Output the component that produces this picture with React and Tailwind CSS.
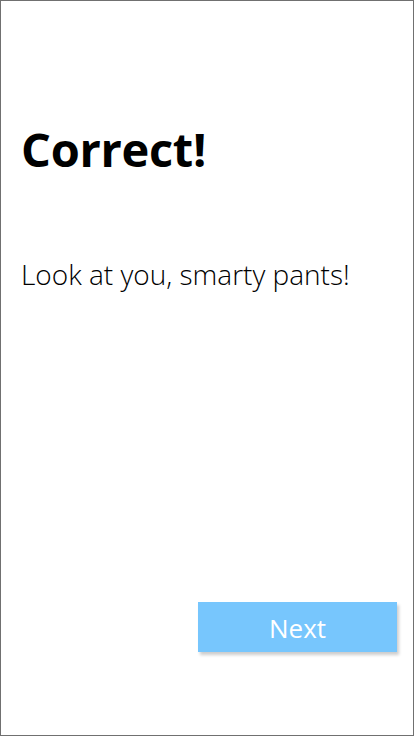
import React from "react";

export default function App() {
    return (
        <div className="w-[414px] h-[736px] border border-[#707070] bg-white flex flex-col font-['Segoe_UI','Open_Sans',sans-serif] text-black">
            {/* Heading */}
            <h1 className="mt-[116px] ml-[20px] text-[47px] leading-[64px] font-bold tracking-[-0.3px]">Correct!</h1>

            {/* Message */}
            <p className="mt-[75px] ml-[20px] text-[28px] leading-[36px] font-light">Look at you, smarty pants!</p>

            {/* Footer button */}
            <div className="mt-auto mb-[83px] flex justify-end pr-[16px]">
                <button className="w-[199px] h-[50px] bg-[#77c6fd] text-white text-[26px] font-normal pt-[2px] shadow-[2px_3px_3px_rgba(0,0,0,0.2)]">
                    Next
                </button>
            </div>
        </div>
    );
}
